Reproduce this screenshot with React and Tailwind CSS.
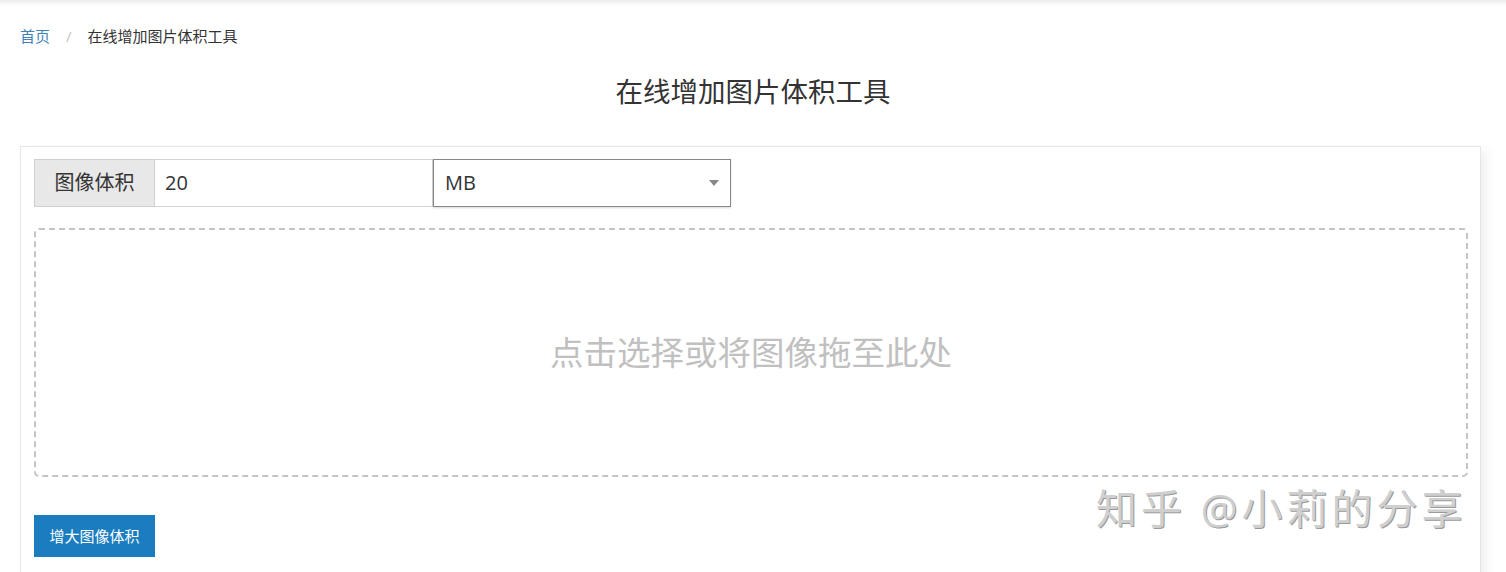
const font = { fontFamily: '"Open Sans", "Noto Sans CJK SC", sans-serif' };

const App = () => {
  return (
    <div className="relative min-h-[572px] bg-white text-[#333]" style={font}>
      {/* top nav shadow */}
      <div className="h-[6px] bg-gradient-to-b from-[#ececec] to-white" />

      <nav className="flex items-center pl-[20px] pt-[20px] text-[15px] leading-[20px]">
        <a className="text-[#3f83b8]">首页</a>
        <span className="px-[16px] text-[#c4c4c4]">/</span>
        <span className="text-[#333]">在线增加图片体积工具</span>
      </nav>

      <h1 className="mt-[28px] text-center text-[27.5px] leading-[36px] text-[#333]">在线增加图片体积工具</h1>

      <section className="ml-[20px] mr-[25px] mt-[36px] border border-[#e6e6e6] bg-white pb-[20px] pl-[13px] pr-[12px] pt-[12px] shadow-[6px_4px_10px_rgba(0,0,0,0.06)]">
        <div className="flex h-[48px] w-[697px]">
          <span className="flex w-[121px] items-center justify-center border border-[#cfcfcf] bg-[#e8e8e8] text-[20px] text-[#333]">
            图像体积
          </span>
          <input
            className="w-[278px] border border-l-0 border-[#d4d4d4] px-[10px] text-[20px] text-[#333] outline-none"
            defaultValue="20"
          />
          <div className="flex flex-1 items-center justify-between border border-[#888] px-[11px] text-[20px] text-[#333] shadow-[0_1px_2px_rgba(0,0,0,0.15)]">
            <span>MB</span>
            <svg width="10" height="6" viewBox="0 0 10 6">
              <path d="M0 0h10L5 6z" fill="#888" />
            </svg>
          </div>
        </div>

        <div className="mt-[21px] flex h-[249px] items-center justify-center rounded-[5px] border-2 border-dashed border-[#c4c4c4]">
          <span className="text-[33.5px] text-[#c0c0c0]">点击选择或将图像拖至此处</span>
        </div>

        <button className="mt-[38px] h-[42px] w-[121px] bg-[#1b7cc0] text-[15px] text-white">增大图像体积</button>
      </section>

      {/* watermark */}
      <div className="pointer-events-none absolute left-[1096px] top-[482px] text-[41px] leading-[52px] tracking-[4px] text-[#cfcfcf] [text-shadow:1px_1px_0_#9a9a9a]">
        知乎 @小莉的分享
      </div>
    </div>
  );
};

export default App;
